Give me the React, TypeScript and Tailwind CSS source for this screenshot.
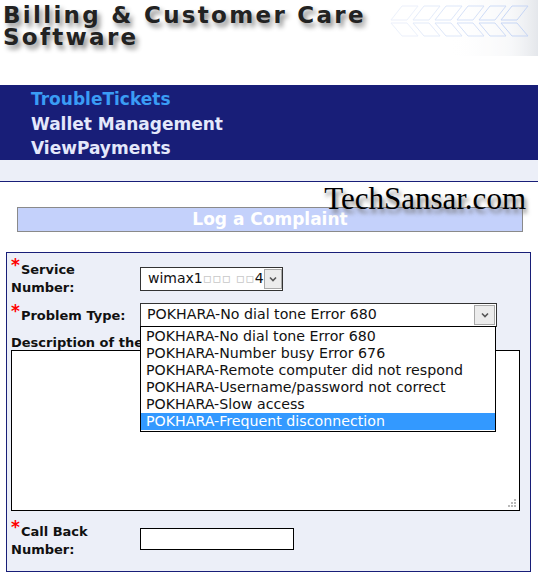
import React from 'react';

const verdana = { fontFamily: '"DejaVu Sans", Verdana, sans-serif' };

const problemTypes = [
  'POKHARA-No dial tone Error 680',
  'POKHARA-Number busy Error 676',
  'POKHARA-Remote computer did not respond',
  'POKHARA-Username/password not correct',
  'POKHARA-Slow access',
  'POKHARA-Frequent disconnection',
];

function Required() {
  return <span className="relative -top-[3px] mr-px text-[17px] leading-none text-[#ff0000]">*</span>;
}

function Chevron() {
  return (
    <svg viewBox="0 0 10 10" className="h-2.5 w-2.5 text-[#555]" fill="none" stroke="currentColor" strokeWidth="1.6">
      <path d="M2 3.5 L5 6.5 L8 3.5" />
    </svg>
  );
}

function Stripes() {
  // faded chevron pattern in the header corner
  const cols = [0, 1, 2, 3, 4, 5];
  return (
    <svg width="150" height="56" viewBox="0 0 150 56" className="opacity-70">
      <defs>
        <linearGradient id="fade" x1="0" x2="1" y1="0" y2="0">
          <stop offset="0" stopColor="#fff" stopOpacity="0" />
          <stop offset="0.7" stopColor="#eef0f3" stopOpacity="0.6" />
          <stop offset="1" stopColor="#d9dde3" stopOpacity="1" />
        </linearGradient>
      </defs>
      <rect x="60" y="0" width="90" height="56" fill="url(#fade)" />
      {cols.map((i) => (
        <g key={i} stroke="#a9c1f2" strokeWidth="1" fill="none" opacity={0.3 + i * 0.12}>
          <path d={`M${14 + i * 22} 6 L${30 + i * 22} 6 L${19 + i * 22} 20 L${3 + i * 22} 20 Z`} />
          <path d={`M${3 + i * 22} 23 L${19 + i * 22} 23 L${30 + i * 22} 36 L${14 + i * 22} 36 Z`} />
        </g>
      ))}
    </svg>
  );
}

export default function App() {
  return (
    <div className="h-[578px] w-[538px] overflow-hidden bg-white" style={verdana}>
      {/* header */}
      <div className="flex h-[85px] items-start justify-between">
        <h1 className="whitespace-nowrap pl-[3px] pt-[4px] text-[23px] font-bold leading-[22px] tracking-[2.3px] text-[#222] [text-shadow:3px_4px_5px_#8a8a8a]">
          Billing &amp; Customer Care
          <br />
          Software
        </h1>
        <div className="shrink-0">
          <Stripes />
        </div>
      </div>

      {/* nav */}
      <nav className="flex h-[75px] flex-col bg-[#181e78] pl-[31px] pt-[2px] text-[17px] font-bold leading-[24.5px]">
        <a className="text-[#3a9cf5]">TroubleTickets</a>
        <a className="text-[#e4e8fb]">Wallet Management</a>
        <a className="text-[#e4e8fb]">ViewPayments</a>
      </nav>
      <div className="h-[22px] border-b border-[#181e78] bg-[#eceff8]" />

      {/* title */}
      <div className="relative h-[70px] pt-[25px]">
        <div
          className="absolute right-[12px] top-0 text-[31px] leading-[34px] text-black [text-shadow:2px_4px_4px_#777]"
          style={{ fontFamily: '"Liberation Serif", "Times New Roman", serif' }}
        >
          TechSansar.com
        </div>
        <div className="ml-[17px] flex h-[25px] w-[506px] items-center justify-center border border-[#8a8a8a] bg-[#c4d1fb] text-[17px] font-bold text-white">
          Log a Complaint
        </div>
      </div>

      {/* form */}
      <div className="mx-[6px] h-[320px] w-[525px] border border-[#181e78] bg-[#eceff8] px-[4px] pt-[7px] text-[13px] text-[#111]">
        <div className="grid grid-cols-[129px_1fr] items-center">
          <div className="font-bold leading-[18px]">
            <Required />
            Service
            <br />
            Number:
          </div>
          <div className="flex h-[24px] w-[143px] items-center border border-[#333] bg-white pl-[7px] text-[14px]">
            <span className="flex-1 whitespace-nowrap">
              wimax1
              <span className="text-[#c8c8c8]">▫▫▫ ▫▫</span>4
            </span>
            <span className="flex h-[20px] w-[18px] items-center justify-center border border-[#a8a8a8] bg-[#ececec]">
              <Chevron />
            </span>
          </div>
        </div>

        <div className="mt-[6px] grid grid-cols-[129px_1fr] items-center">
          <div className="pt-[1px] font-bold">
            <Required />
            Problem Type:
          </div>
          <div className="relative">
            <div className="flex h-[24px] w-[357px] items-center border border-[#333] bg-white pl-[6px] text-[14.2px]">
              <span className="flex-1">{problemTypes[0]}</span>
              <span className="mr-px flex h-[20px] w-[21px] items-center justify-center border border-[#a8a8a8] bg-[#ececec]">
                <Chevron />
              </span>
            </div>
            <ul className="absolute left-0 top-[23px] z-10 w-[356px] border border-black bg-white py-px text-[14.2px] leading-[17px]">
              {problemTypes.map((p, i) => (
                <li
                  key={p}
                  className={i === problemTypes.length - 1 ? 'bg-[#3399ff] pl-[5px] text-white' : 'pl-[5px] text-[#111]'}
                >
                  {p}
                </li>
              ))}
            </ul>
          </div>
        </div>

        <div className="mt-[8px] whitespace-nowrap font-bold leading-[15px]">Description of the Problem:</div>
        <div className="relative h-[161px] w-[509px] border border-black bg-white">
          <svg width="10" height="10" viewBox="0 0 10 10" className="absolute bottom-[2px] right-[2px]" fill="#b9b9b9">
            <rect x="7" y="1" width="2" height="2" />
            <rect x="4" y="4" width="2" height="2" />
            <rect x="7" y="4" width="2" height="2" />
            <rect x="1" y="7" width="2" height="2" />
            <rect x="4" y="7" width="2" height="2" />
            <rect x="7" y="7" width="2" height="2" />
          </svg>
        </div>

        <div className="mt-[11px] grid grid-cols-[129px_1fr] items-start">
          <div className="font-bold leading-[18px]">
            <Required />
            Call Back
            <br />
            Number:
          </div>
          <div className="mt-[6px] h-[22px] w-[154px] border border-black bg-white" />
        </div>
      </div>
    </div>
  );
}
